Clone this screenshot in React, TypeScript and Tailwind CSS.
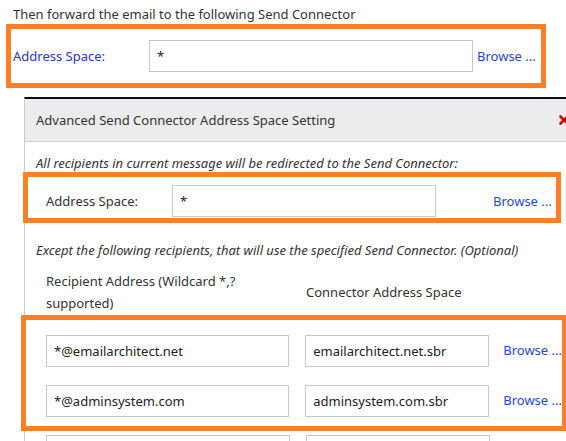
import React from "react";

const Browse = ({ className = "" }: { className?: string }) => (
  <a className={"text-[#1f48d0] cursor-pointer whitespace-nowrap " + className}>Browse ...</a>
);

const TextBox = ({ value, className = "" }: { value: string; className?: string }) => (
  <input
    type="text"
    defaultValue={value}
    className={
      "h-[32px] border border-[#c8c8c8] bg-white px-[7px] text-[13px] text-[#222] outline-none " +
      className
    }
  />
);

const rows = [
  { address: "*@emailarchitect.net", space: "emailarchitect.net.sbr" },
  { address: "*@adminsystem.com", space: "adminsystem.com.sbr" },
  { address: "", space: "" },
];

const App = () => {
  return (
    <div
      className="w-[566px] h-[441px] overflow-hidden bg-white text-[13px] text-[#333]"
      style={{ fontFamily: '"Noto Sans", "Open Sans", sans-serif' }}
    >
      <p className="pl-[13px] pt-[5px] leading-[18px]">
        Then forward the email to the following Send Connector
      </p>

      <div className="ml-[6px] mt-[1px] w-[540px] h-[64px] border-[5px] border-[#ff7f27] flex items-center">
        <span className="pl-[2px] w-[138px] pt-[2px] text-[#2a35c4]">Address Space:</span>
        <TextBox value="*" className="w-[324px]" />
        <Browse className="ml-[4px] pt-[2px]" />
      </div>

      <div className="ml-[24px] mt-[9px] border-t-2 border-t-[#0b0b1e] border-l border-l-[#cccccc]">
        <div className="h-[43px] bg-[#ececec] border-b border-b-[#cccccc] flex items-center justify-between pl-[11px] pt-[2px]">
          <span>Advanced Send Connector Address Space Setting</span>
          <svg width="10" height="10" viewBox="0 0 10 10" className="mr-[-3px] mb-[2px]">
            <path d="M1.5 1.5 L8.5 8.5 M8.5 1.5 L1.5 8.5" stroke="#d40000" strokeWidth="2.6" strokeLinecap="round" />
          </svg>
        </div>

        <p className="pl-[11px] pt-[12px] italic leading-[18px]">
          All recipients in current message will be redirected to the Send Connector:
        </p>

        <div className="ml-[-2px] w-[538px] h-[51px] border-[5px] border-[#ff7f27] flex items-start pt-[8px]">
          <span className="pl-[18px] w-[144px] pt-[7px]">Address Space:</span>
          <TextBox value="*" className="w-[264px]" />
          <Browse className="ml-[57px] pt-[7px]" />
        </div>

        <p className="pl-[11px] pt-[18px] italic leading-[18px]">
          Except the following recipients, that will use the specified Send Connector. (Optional)
        </p>

        <div className="flex items-center pl-[21px] pt-[11px] leading-[22px]">
          <span className="w-[260px]">
            Recipient Address (Wildcard *,?
            <br />
            supported)
          </span>
          <span>Connector Address Space</span>
        </div>

        <div className="ml-[-4px] mt-[1px] w-[546px] border-[5px] border-[#ff7f27] pt-[15px] pb-[9px] flex flex-col gap-[18px]">
          {rows.slice(0, 2).map((r) => (
            <div key={r.address} className="flex items-center pl-[20px]">
              <TextBox value={r.address} className="w-[244px]" />
              <TextBox value={r.space} className="ml-[16px] w-[184px]" />
              <Browse className="ml-[14px]" />
            </div>
          ))}
        </div>

        <div className="flex items-center pl-[21px] pt-[4px]">
          <TextBox value={rows[2].address} className="w-[244px]" />
          <TextBox value={rows[2].space} className="ml-[16px] w-[184px]" />
        </div>
      </div>
    </div>
  );
};

export default App;
